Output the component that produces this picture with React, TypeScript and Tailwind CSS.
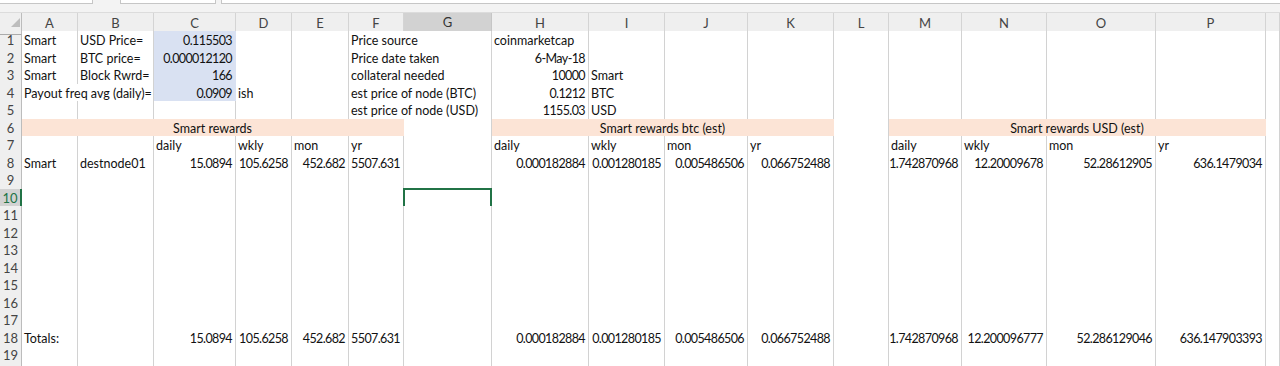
type Fill = 'blue' | 'peach';
type Cell = { t?: string; span?: number; align?: 'l' | 'r' | 'c'; fill?: Fill; sel?: boolean };

const COLS = ['A', 'B', 'C', 'D', 'E', 'F', 'G', 'H', 'I', 'J', 'K', 'L', 'M', 'N', 'O', 'P', 'Q'];

const gridCols =
  'grid grid-cols-[22px_56px_76px_82px_56px_57px_55px_88px_97px_76px_83px_86px_55px_73px_85px_109px_110px_1fr]';

const spanCls: Record<number, string> = {
  1: '',
  2: 'col-span-2',
  4: 'col-span-4',
  6: 'col-span-6',
};

const rowH = ['h-[18px]', 'h-[17px]'];

const blue = (t: string): Cell => ({ t, align: 'r', fill: 'blue' });
const r = (t: string): Cell => ({ t, align: 'r' });
const l = (t: string): Cell => ({ t });

const rows: Record<number, Record<string, Cell>> = {
  1: { A: l('Smart'), B: l('USD Price='), C: blue('0.115503'), F: { t: 'Price source', span: 2 }, H: l('coinmarketcap') },
  2: { A: l('Smart'), B: l('BTC price='), C: blue('0.000012120'), F: { t: 'Price date taken', span: 2 }, H: r('6-May-18') },
  3: { A: l('Smart'), B: l('Block Rwrd='), C: blue('166'), F: { t: 'collateral needed', span: 2 }, H: r('10000'), I: l('Smart') },
  4: {
    A: { t: 'Payout freq avg (daily)=', span: 2 },
    C: blue('0.0909'),
    D: l('ish'),
    F: { t: 'est price of node (BTC)', span: 2 },
    H: r('0.1212'),
    I: l('BTC'),
  },
  5: { F: { t: 'est price of node (USD)', span: 2 }, H: r('1155.03'), I: l('USD') },
  6: {
    A: { t: 'Smart rewards', span: 6, align: 'c', fill: 'peach' },
    H: { t: 'Smart rewards btc (est)', span: 4, align: 'c', fill: 'peach' },
    M: { t: 'Smart rewards USD (est)', span: 4, align: 'c', fill: 'peach' },
  },
  7: {
    C: l('daily'), D: l('wkly'), E: l('mon'), F: l('yr'),
    H: l('daily'), I: l('wkly'), J: l('mon'), K: l('yr'),
    M: l('daily'), N: l('wkly'), O: l('mon'), P: l('yr'),
  },
  8: {
    A: l('Smart'), B: l('destnode01'),
    C: r('15.0894'), D: r('105.6258'), E: r('452.682'), F: r('5507.631'),
    H: r('0.000182884'), I: r('0.001280185'), J: r('0.005486506'), K: r('0.066752488'),
    M: r('1.742870968'), N: r('12.20009678'), O: r('52.28612905'), P: r('636.1479034'),
  },
  10: { G: { sel: true } },
  18: {
    A: l('Totals:'),
    C: r('15.0894'), D: r('105.6258'), E: r('452.682'), F: r('5507.631'),
    H: r('0.000182884'), I: r('0.001280185'), J: r('0.005486506'), K: r('0.066752488'),
    M: r('1.742870968'), N: r('12.200096777'), O: r('52.286129046'), P: r('636.147903393'),
  },
};

function SheetRow({ n }: { n: number }) {
  const data = rows[n] ?? {};
  const cells: JSX.Element[] = [];
  let i = 0;
  while (i < COLS.length) {
    const col = COLS[i];
    const c = data[col] ?? {};
    const span = c.span ?? 1;
    const fillCls =
      c.fill === 'blue'
        ? 'bg-[#d9e1f2] border-[#d9e1f2]'
        : c.fill === 'peach'
          ? 'bg-[#fce4d6] border-[#fce4d6]'
          : 'bg-white border-[#d2d2d2]';
    const alignCls =
      c.align === 'r' ? 'justify-end pr-[3px]' : c.align === 'c' ? 'justify-center' : 'justify-start pl-[2px]';
    // numbers are set a touch tighter, like Calibri's narrow figures
    const numCls = c.align === 'r' ? 'tracking-[-0.6px]' : '';
    cells.push(
      <div
        key={col}
        className={`relative flex items-center border-r border-b whitespace-nowrap ${spanCls[span]} ${fillCls} ${alignCls}`}
      >
        {c.t && <span className={`leading-[15px] ${numCls}`}>{c.t}</span>}
        {c.sel && (
          <div className="absolute -left-px -top-px right-[-1px] bottom-[-1px] border-2 border-[#217346]">
            <div className="absolute -right-[4px] -bottom-[4px] w-[6px] h-[6px] bg-[#217346] border border-white" />
          </div>
        )}
      </div>,
    );
    i += span;
  }
  const active = n === 10;
  return (
    <div className={`${gridCols} ${rowH[(n + 1) % 2]}`}>
      <div
        className={`flex items-center justify-center border-b text-[13px] ${
          active
            ? 'bg-[#d2d2d2] border-r-2 border-r-[#217346] border-b-[#c6c6c6] text-[#217346]'
            : 'bg-[#efefef] border-r border-r-[#bcbcbc] border-b-[#d4d4d4] text-[#444]'
        }`}
      >
        {n}
      </div>
      {cells}
    </div>
  );
}

export default function App() {
  const nums = Array.from({ length: 19 }, (_, k) => k + 1);
  return (
    <div className="w-[1280px] h-[366px] overflow-hidden bg-white font-[Lato,sans-serif] text-[12.5px] text-[#111]">
      {/* formula bar strip */}
      <div className="flex h-[13px] bg-[#f3f3f3] border-b border-[#dcdcdc]">
        <div className="w-[93px] h-[4px] bg-white border-r border-b border-[#c6c6c6]" />
        <div className="w-[27px]" />
        <div className="w-[96px] h-[4px] bg-white border-x border-b border-[#c6c6c6]" />
        <div className="w-[5px]" />
        <div className="flex-1 h-[4px] bg-white border-l border-b border-[#c6c6c6]" />
      </div>
      {/* column headers */}
      <div className={`${gridCols} h-[18px] text-[13px] text-[#444]`}>
        <div className="relative bg-[#efefef] border-r border-b border-r-[#bcbcbc] border-b-[#ababab]">
          <svg className="absolute left-0 top-0" width="22" height="18" viewBox="0 0 22 18">
            <polygon points="20,5 20,14 11,14" fill="#bdbdbd" />
          </svg>
        </div>
        {COLS.map((c) =>
          c === 'G' ? (
            <div
              key={c}
              className="flex items-center justify-center bg-[#d2d2d2] border-r border-[#c6c6c6] border-b-2 border-b-[#217346] text-[#333]"
            >
              {c}
            </div>
          ) : (
            <div
              key={c}
              className="flex items-center justify-center bg-[#efefef] border-r border-r-[#d4d4d4] border-b border-b-[#ababab]"
            >
              {c === 'Q' ? '' : c}
            </div>
          ),
        )}
      </div>
      {nums.map((n) => (
        <SheetRow key={n} n={n} />
      ))}
    </div>
  );
}
